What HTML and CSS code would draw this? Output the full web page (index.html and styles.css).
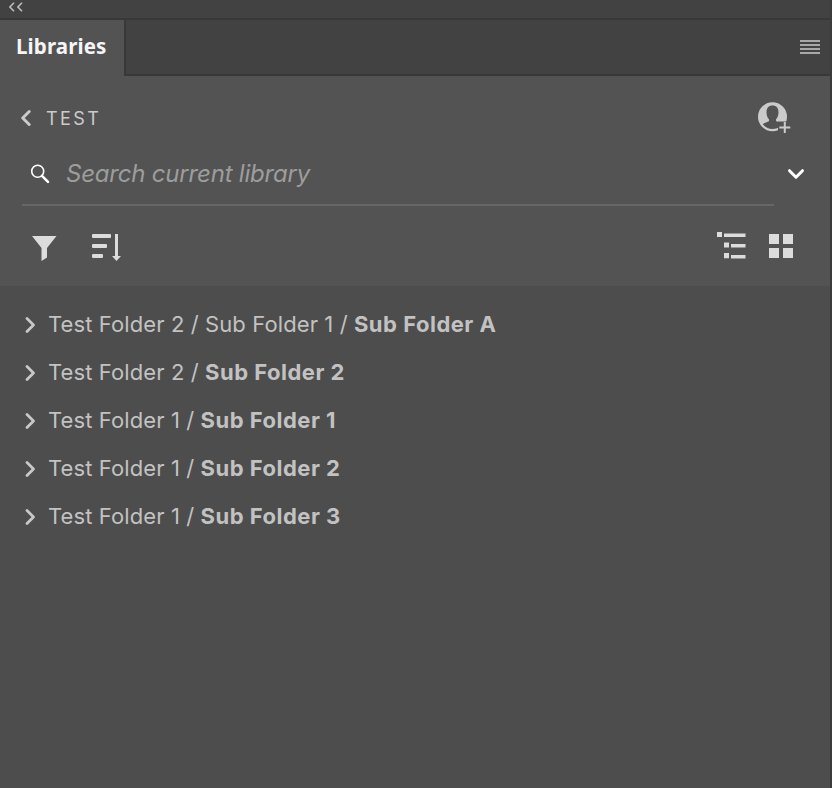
FILE: index.html
```html
<!DOCTYPE html>
<html lang="en">
<head>
<meta charset="utf-8">
<title>Libraries</title>
<link rel="stylesheet" href="styles.css">
</head>
<body>
<main class="panel">
  <div class="topbar">
    <svg width="16" height="12" viewBox="0 0 16 12"><path d="M6 1.700 1.900 6 6 10.300M14 1.700 9.900 6l4.100 4.300" fill="none" stroke="#bcbcbc" stroke-width="1.600"/></svg>
  </div>
  <div class="tabs">
    <div class="tab">Libraries</div>
    <div class="tabs-rest">
      <svg width="20" height="14" viewBox="0 0 20 14"><path d="M0 0h20v2H0zM0 4h20v2H0zM0 8h20v2H0zM0 12h20v2H0z" fill="#a8a8a8"/></svg>
    </div>
  </div>
  <header class="header">
    <div class="crumb">
      <svg class="back" width="12" height="18" viewBox="0 0 12 18"><path d="M9.200 2.500 2.700 9l6.500 6.500" fill="none" stroke="#cbcbcb" stroke-width="3" stroke-linecap="round" stroke-linejoin="round"/></svg>
      <span class="crumb-name">TEST</span>
      <svg class="invite" width="34" height="32" viewBox="0 0 34 32">
        <circle cx="14.500" cy="14.800" r="14.500" fill="#cbcbcb"/>
        <path d="M14.500 3.600c-3.900 0-6 2.700-6 6.600 0 2.900.9 5.400 2.500 7v1.600c0 1.200-3.600 1.500-6.200 3.400C7.200 25.300 10.600 27 14.500 27c2.500 0 5-.7 7-2l2-4c-2.500-1.200-5.500-1.200-5.500-2.200v-1.600c1.600-1.600 2.500-4.100 2.500-7 0-3.900-2.100-6.600-6-6.600z" fill="#535353"/>
        <path d="M20 19.500h13.500v12.500H20z" fill="#535353"/>
        <path d="M26.800 20v11M21.300 25.500h11" stroke="#cbcbcb" stroke-width="2"/>
      </svg>
    </div>
    <div class="search">
      <div class="field">
        <svg class="glass" width="20" height="20" viewBox="0 0 20 20"><circle cx="7.700" cy="7.200" r="6" fill="none" stroke="#fff" stroke-width="1.600"/><path d="m12 11.800 6 6" stroke="#fff" stroke-width="2.600" stroke-linecap="round"/></svg>
        <span class="placeholder">Search current library</span>
      </div>
      <svg class="down" width="18" height="12" viewBox="0 0 18 12"><path d="M2.500 2.700 9 9.300l6.500-6.600" fill="none" stroke="#fff" stroke-width="3" stroke-linecap="round" stroke-linejoin="round"/></svg>
    </div>
    <div class="tools">
      <svg width="26" height="26" viewBox="0 0 26 26"><path d="M0 0h24.500L15 12v9.500L9.500 25V12z" fill="#dcdcdc"/></svg>
      <svg class="sort" width="30" height="28" viewBox="0 0 30 28"><g fill="#dcdcdc"><rect width="19" height="4" rx="1"/><rect y="10" width="15" height="4" rx="1"/><rect y="20" width="11" height="4" rx="1"/><path d="M23 0h3v22h3l-4.500 5-4.500-5H23z"/></g></svg>
      <svg class="tree" width="30" height="28" viewBox="0 0 30 28"><g fill="#dcdcdc"><path d="M0 0h5v5H0zM7 1.500h21.500V5H7zM7 10.500h5v5H7zM14 12h14.500v3.600H14zM7 21h5v5.200H7zM14 23h14.500v3.500H14z"/></g></svg>
      <svg class="grid" width="24" height="24" viewBox="0 0 24 24"><path d="M0 0h10v10H0zM14 0h10v10H14zM0 14h10v10H0zM14 14h10v10H14z" fill="#dcdcdc"/></svg>
    </div>
  </header>
  <ul class="list">
    <li><svg width="12" height="18" viewBox="0 0 12 18"><path d="M3 2.500 9.500 9 3 15.500" /></svg><span>Test Folder 2 / Sub Folder 1 / <b>Sub Folder A</b></span></li>
    <li><svg width="12" height="18" viewBox="0 0 12 18"><path d="M3 2.500 9.500 9 3 15.500" /></svg><span>Test Folder 2 / <b>Sub Folder 2</b></span></li>
    <li><svg width="12" height="18" viewBox="0 0 12 18"><path d="M3 2.500 9.500 9 3 15.500" /></svg><span>Test Folder 1 / <b>Sub Folder 1</b></span></li>
    <li><svg width="12" height="18" viewBox="0 0 12 18"><path d="M3 2.500 9.500 9 3 15.500" /></svg><span>Test Folder 1 / <b>Sub Folder 2</b></span></li>
    <li><svg width="12" height="18" viewBox="0 0 12 18"><path d="M3 2.500 9.500 9 3 15.500" /></svg><span>Test Folder 1 / <b>Sub Folder 3</b></span></li>
  </ul>
</main>
</body>
</html>
```
FILE: styles.css
```css
* { box-sizing: border-box; }
body { margin: 0; background: #4d4d4d; font-family: Inter, "Liberation Sans", sans-serif; }
svg { display: block; flex: none; }
.panel { height: 788px; display: flex; flex-direction: column; border-right: 2px solid #3b3b3b; background: #4d4d4d; overflow: hidden; }
.topbar { height: 20px; flex: none; padding: 1px 0 0 8px; background: #424242; border-bottom: 2px solid #383838; }
.tabs { display: flex; height: 56px; flex: none; }
.tab { width: 124px; background: #535353; padding-left: 16px; color: #f5f5f5; font: 700 20.500px/53px "Noto Sans", sans-serif; letter-spacing: .12px; white-space: nowrap; }
.tabs-rest { flex: 1; display: flex; justify-content: flex-end; align-items: center; padding-right: 10px; background: #424242; border-left: 2px solid #383838; border-bottom: 2px solid #383838; }
.header { height: 210px; flex: none; background: #535353; padding: 25px 0 0 20px; }
.crumb { display: flex; align-items: center; height: 34px; }
.crumb-name { margin-left: 14px; color: #cbcbcb; font-size: 18px; letter-spacing: 2.400px; }
.invite { margin: 0 38px 0 auto; }
.search { display: flex; height: 71px; }
.field { display: flex; align-items: center; width: 752px; margin-left: 2px; padding: 0 0 0 8px; border-bottom: 2px solid #666; }
.glass { margin-top: 8px; }
.placeholder { margin: 7px 0 0 16px; color: #9d9d9d; font-size: 24px; font-style: italic; font-weight: 450; letter-spacing: -.2px; white-space: nowrap; }
.down { margin: 33px 0 0 13px; }
.tools { display: flex; align-items: flex-start; padding: 28px 37px 0 12px; }
.tools svg:first-child { margin-top: 2px; }
.sort { margin-left: 34px; }
.tree { margin: -2px 0 0 auto; }
.grid { margin-left: 22px; }
.list { list-style: none; margin: 0; padding: 14px 0 0 24px; color: #c2c2c2; font-size: 22px; letter-spacing: .1px; }
.list li { display: flex; align-items: center; height: 48px; white-space: nowrap; }
.list svg { margin: 2px 0 0 -.5px; }
.list span { margin-left: 12.500px; }
.list b { letter-spacing: .5px; }
.list path { fill: none; stroke: #c8c8c8; stroke-width: 2.800; stroke-linecap: round; stroke-linejoin: round; }
```
